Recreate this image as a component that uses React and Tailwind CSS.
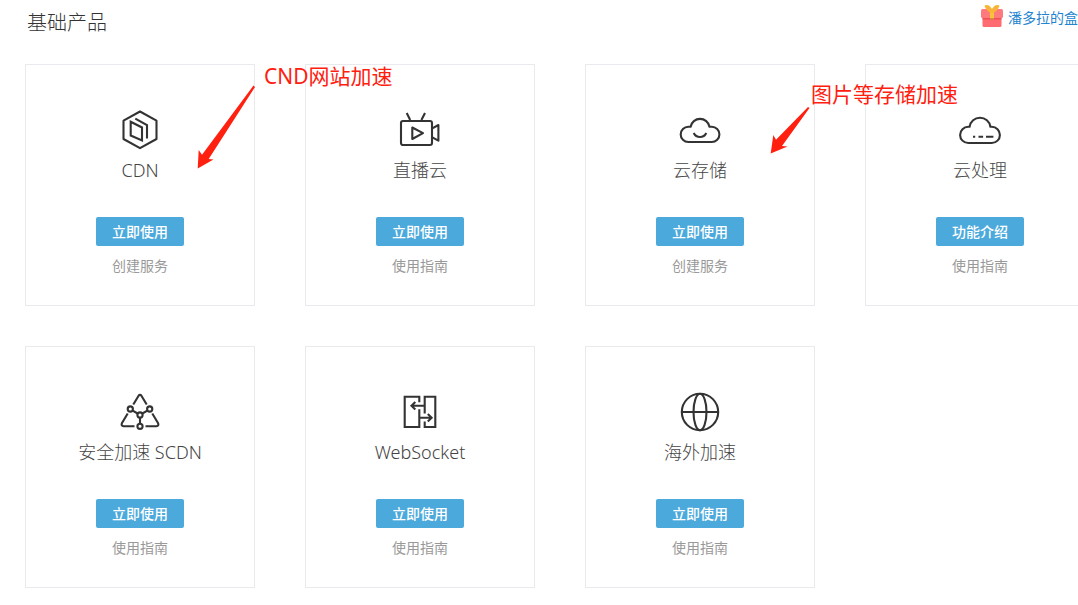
import React from "react";

function Icon({ children }) {
  return (
    <svg
      viewBox="0 0 44 44"
      className="size-11"
      fill="none"
      stroke="#333333"
      strokeWidth="2.1"
      strokeLinejoin="round"
      aria-hidden="true"
    >
      {children}
    </svg>
  );
}

const icons = {
  cdn: (
    <Icon>
      <path d="M22 2.5 38.5 11.7V30L22 39.2 5.500 30V11.700Z" />
      <path strokeLinejoin="miter" d="M12.700 12.700 24 18.500V31.500L12.700 26.500ZM17.300 9.700 29 16.200V29.500" />
    </Icon>
  ),
  live: (
    <Icon>
      <rect x="3" y="12" width="31" height="24" rx="2" />
      <path d="M8.700 4 12.200 11M27 4 23.400 11M14.300 18.500V30L25 24.100ZM34.300 19.300 40.400 16V31.700L34.300 28.400" />
    </Icon>
  ),
  storage: (
    <Icon>
      <path d="M10.300 33a7.600 7.600 0 0 1 0-15.200h2.300a9.600 9.600 0 0 1 18.900 0h2.300a7.600 7.600 0 0 1 0 15.200z" />
      <path d="M15.700 24c1.400 2.800 3.600 4 6.300 4s4.900-1.200 6.300-4" />
    </Icon>
  ),
  process: (
    <Icon>
      <path d="M10.200 34a8.100 8.100 0 0 1 0-16.200h1.400a10.500 10.500 0 0 1 20.800 0h1.400a8.100 8.100 0 0 1 0 16.200z" />
      <path d="M15 27.700h2.200M20.500 27.700h4.600M28 27.700h7.400" />
    </Icon>
  ),
  scdn: (
    <Icon>
      <path d="M15.300 13.500 20.600 4.700q1.400-2 2.800 0L28.700 13.500M9.700 22.500 4 32q-1.300 2.900 1.700 3.200H16.500M34.300 22.500 40 32q1.300 2.900-1.700 3.200H27.500" />
      <path d="M14.700 19.600 19.600 22.500M29.300 19.600 24.400 22.500M22 26.500V32.500" />
      <circle cx="12.300" cy="18" r="2.600" />
      <circle cx="31.700" cy="18" r="2.600" />
      <circle cx="22" cy="24" r="2.600" />
      <circle cx="22" cy="35.300" r="2.600" />
    </Icon>
  ),
  socket: (
    <Icon>
      <g strokeLinejoin="miter">
        <path d="M21.300 11.300V5.700H6.700V36H21.300V18.300M26.700 22.500V5.700H37.300V36H26.700V30.500" />
        <path d="M27 14.700H14M17.300 11 13.500 14.700 17.300 18.400M21.300 26.700H33M29.800 23 33.600 26.700 29.800 30.400" />
      </g>
    </Icon>
  ),
  globe: (
    <Icon>
      <circle cx="22" cy="21" r="18.200" />
      <ellipse cx="22" cy="21" rx="6.500" ry="18.200" />
      <path d="M3.800 21H40.200" />
    </Icon>
  ),
};

const products = [
  { icon: "cdn", name: "CDN", action: "立即使用", link: "创建服务", note: "cdn" },
  { icon: "live", name: "直播云", action: "立即使用", link: "使用指南" },
  { icon: "storage", name: "云存储", action: "立即使用", link: "创建服务", note: "storage" },
  { icon: "process", name: "云处理", action: "功能介绍", link: "使用指南" },
  { icon: "scdn", name: "安全加速 SCDN", action: "立即使用", link: "使用指南" },
  { icon: "socket", name: "WebSocket", action: "立即使用", link: "使用指南" },
  { icon: "globe", name: "海外加速", action: "立即使用", link: "使用指南" },
];

const notes = {
  cdn: (
    <>
      <svg viewBox="0 0 60 86" className="absolute top-[19px] left-[170px] z-10 h-[86px] w-[60px]" aria-hidden="true">
        <path fill="#ff2010" d="M57.500 1.500 59 3 12.700 75 17.500 75.500 1.700 84.500 2.700 66 6 70.700Z" />
      </svg>
      <p className="absolute -top-[3px] left-[238px] z-10 text-[21px] leading-7 whitespace-nowrap text-[#ff2010]">
        CND网站加速
      </p>
    </>
  ),
  storage: (
    <>
      <svg viewBox="0 0 42 50" className="absolute top-10 left-[183px] z-10 h-[50px] w-[42px]" aria-hidden="true">
        <path fill="#ff2010" d="M39 2 40.500 3 13 41 18.500 41.500 1.700 48.500 4.300 30 7 34.700Z" />
      </svg>
      <p className="absolute top-[15px] left-[225px] z-10 text-[21px] leading-7 whitespace-nowrap text-[#ff2010]">
        图片等存储加速
      </p>
    </>
  ),
};

function Gift() {
  return (
    <svg viewBox="0 0 24 24" className="mb-1 size-6" aria-hidden="true">
      <rect x="2.500" y="11" width="19" height="12" rx="1.500" fill="#ff6b70" />
      <rect x="1" y="5" width="22" height="9" rx="1.500" fill="#ff7a7c" />
      <path d="M2.500 14h19v1.500h-19z" fill="#ee5058" />
      <path d="M10 6h4v8h-4z" fill="#f8c33c" />
      <path d="M10 14h4v1.500h-4z" fill="#dd8d35" />
      <path d="M12 8C10 7.500 6.500 5 5.500 2.200 8 1.200 11 3.500 12 8 13 3.500 16 1.200 18.500 2.200 17.500 5 14 7.500 12 8Z" fill="#ff9a7a" stroke="#f6b92f" strokeWidth="1.800" strokeLinejoin="round" />
    </svg>
  );
}

function ProductCard({ product }) {
  return (
    <li className="relative flex flex-col items-center border border-[#e9eaee] pt-11 pb-[29px]">
      {icons[product.icon]}
      <h2 className="mt-[3px] text-lg leading-7 font-light text-[#444444]">{product.name}</h2>
      <button type="button" className="mt-[33px] rounded-xs bg-[#4ca9db] px-4 text-sm leading-[29px] font-medium text-white">
        {product.action}
      </button>
      <a href="#" className="mt-2.5 text-sm leading-5 text-[#999999]">
        {product.link}
      </a>
      {notes[product.note]}
    </li>
  );
}

export default function App() {
  return (
    <main className="overflow-hidden bg-white pb-4 font-['Noto_Sans','Noto_Sans_CJK_SC',sans-serif]">
      <header className="flex items-start justify-between pl-[27px]">
        <h1 className="pt-[9px] text-xl leading-7 font-light text-[#333333]">基础产品</h1>
        <a href="#" className="flex items-center gap-1 pt-1 text-sm leading-7 whitespace-nowrap text-[#2484cf]">
          <Gift />
          潘多拉的盒
        </a>
      </header>
      <ul className="mt-[27px] grid grid-cols-[repeat(4,230px)] gap-x-[50px] gap-y-10 pl-[25px]">
        {products.map((product) => (
          <ProductCard key={product.name} product={product} />
        ))}
      </ul>
    </main>
  );
}
